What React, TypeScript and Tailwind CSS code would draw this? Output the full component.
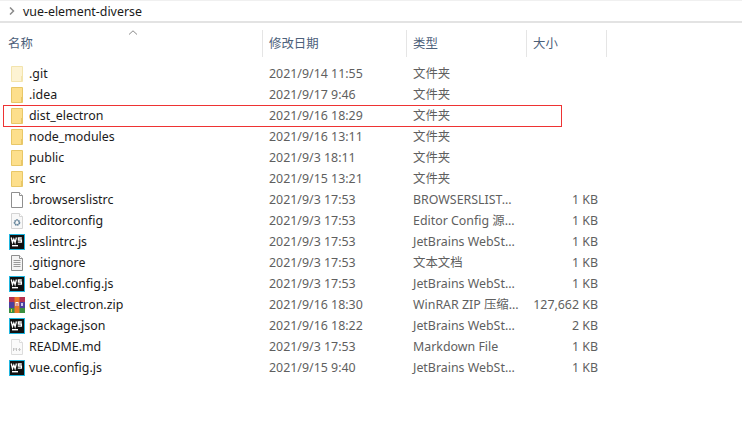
type Kind = "folder" | "folderDim" | "blank" | "config" | "text" | "ws" | "zip" | "md";

interface Item {
  name: string;
  date: string;
  type: string;
  size?: string;
  kind: Kind;
}

const items: Item[] = [
  { name: ".git", date: "2021/9/14 11:55", type: "文件夹", kind: "folderDim" },
  { name: ".idea", date: "2021/9/17 9:46", type: "文件夹", kind: "folder" },
  { name: "dist_electron", date: "2021/9/16 18:29", type: "文件夹", kind: "folder" },
  { name: "node_modules", date: "2021/9/16 13:11", type: "文件夹", kind: "folder" },
  { name: "public", date: "2021/9/3 18:11", type: "文件夹", kind: "folder" },
  { name: "src", date: "2021/9/15 13:21", type: "文件夹", kind: "folder" },
  { name: ".browserslistrc", date: "2021/9/3 17:53", type: "BROWSERSLIST...", size: "1 KB", kind: "blank" },
  { name: ".editorconfig", date: "2021/9/3 17:53", type: "Editor Config 源...", size: "1 KB", kind: "config" },
  { name: ".eslintrc.js", date: "2021/9/3 17:53", type: "JetBrains WebSt...", size: "1 KB", kind: "ws" },
  { name: ".gitignore", date: "2021/9/3 17:53", type: "文本文档", size: "1 KB", kind: "text" },
  { name: "babel.config.js", date: "2021/9/3 17:53", type: "JetBrains WebSt...", size: "1 KB", kind: "ws" },
  { name: "dist_electron.zip", date: "2021/9/16 18:30", type: "WinRAR ZIP 压缩...", size: "127,662 KB", kind: "zip" },
  { name: "package.json", date: "2021/9/16 18:22", type: "JetBrains WebSt...", size: "2 KB", kind: "ws" },
  { name: "README.md", date: "2021/9/3 17:53", type: "Markdown File", size: "1 KB", kind: "md" },
  { name: "vue.config.js", date: "2021/9/15 9:40", type: "JetBrains WebSt...", size: "1 KB", kind: "ws" },
];

function Sheet({ stroke, fill }: { stroke: string; fill: string }) {
  return (
    <>
      <path d="M2.5 .5H10.5L13.5 3.5V15.5H2.5Z" fill={fill} stroke={stroke} />
      <path d="M10.5 .5V3.5H13.5" fill="#fff" stroke={stroke} />
    </>
  );
}

function FileIcon({ kind }: { kind: Kind }) {
  if (kind === "ws") {
    return (
      <svg width="16" height="16" viewBox="0 0 16 16" className="shrink-0">
        <rect x="0" y="0" width="16" height="16" fill="#1fb6e0" />
        <rect x="1" y="1" width="14" height="14" fill="#111" />
        <path d="M2.2 3.5L3.5 8.5L4.8 5L6.1 8.5L7.4 3.5M12.8 4H9.4V6H12.4V8.2H8.8" fill="none" stroke="#fff" strokeWidth="1.3" />
        <rect x="3" y="11" width="6" height="1.4" fill="#fff" />
      </svg>
    );
  }
  if (kind === "zip") {
    return (
      <svg width="16" height="16" viewBox="0 0 16 16" className="shrink-0">
        <rect x="0" y="0" width="16" height="5" fill="#b5314f" />
        <rect x="0" y="5" width="16" height="6" fill="#4b3f9e" />
        <rect x="0" y="11" width="16" height="5" fill="#3b8f3f" />
        <rect x="5.5" y="0" width="5" height="16" fill="#e8782a" />
        <rect x="6.5" y="5" width="3" height="4" fill="#fff" />
        <rect x="7.5" y="6" width="1" height="3" fill="#b5314f" />
        <rect x="2" y="12" width="1" height="3" fill="#e8d24a" />
        <rect x="12" y="6" width="2" height="3" fill="#c9c6e8" />
      </svg>
    );
  }
  if (kind === "blank") {
    return (
      <svg width="16" height="16" viewBox="0 0 16 16" className="shrink-0">
        <Sheet stroke="#8f8f8f" fill="#fff" />
      </svg>
    );
  }
  if (kind === "text") {
    return (
      <svg width="16" height="16" viewBox="0 0 16 16" className="shrink-0">
        <Sheet stroke="#8f8f8f" fill="#f4f4f4" />
        <path d="M4.5 5.5H11.5M4.5 7.5H11.5M4.5 9.5H11.5M4.5 11.5H11.5" stroke="#9a9a9a" />
      </svg>
    );
  }
  if (kind === "config") {
    return (
      <svg width="16" height="16" viewBox="0 0 16 16" className="shrink-0">
        <Sheet stroke="#d4d4d4" fill="#f8f8f8" />
        <circle cx="8" cy="9.5" r="2.4" fill="none" stroke="#5f7f96" strokeWidth="1.8" strokeDasharray="1.4 .5" />
      </svg>
    );
  }
  if (kind === "md") {
    return (
      <svg width="16" height="16" viewBox="0 0 16 16" className="shrink-0">
        <Sheet stroke="#dcdcdc" fill="#fafafa" />
        <path d="M4.5 12V9L6 10.5L7.5 9V12M10.5 9V12M9.2 10.6H11.8" fill="none" stroke="#c4c4c4" />
      </svg>
    );
  }
  const dim = kind === "folderDim";
  return (
    <svg width="16" height="16" viewBox="0 0 16 16" className="shrink-0">
      <path
        d="M2.5 .5H13.5V15.5H2.5Z"
        fill={dim ? "#fdf3d3" : "#fddf8c"}
        stroke={dim ? "#f3e4ad" : "#e8c767"}
      />
      <rect x="12" y="10" width="2" height="5" fill={dim ? "#f3e4ad" : "#e8c767"} />
    </svg>
  );
}

export default function App() {
  return (
    <div className="h-[423px] w-[742px] overflow-hidden bg-white font-['Noto_Sans','Noto_Sans_CJK_SC',sans-serif] text-[12.4px] leading-[21px]">
      <div className="flex h-[23px] items-center border-t border-b-2 border-t-[#f0f0f0] border-b-[#e3e3e3] pl-[9px]">
        <svg width="6" height="8" viewBox="0 0 6 8" className="shrink-0">
          <path d="M1 .5L4.5 4L1 7.5" fill="none" stroke="#8a8a8a" strokeWidth="1.5" />
        </svg>
        <span className="ml-[8px] text-[#1a1a1a]">vue-element-diverse</span>
      </div>

      <div className="mt-[7px] flex h-[27px] text-[#4c607a]">
        <div className="relative flex w-[263px] items-center border-r border-[#e5e5e5] pl-[8px]">
          名称
          <svg width="10" height="5" viewBox="0 0 10 5" className="absolute top-0 left-[128px]">
            <path d="M1 4.5L5 .8L9 4.5" fill="none" stroke="#8a8a8a" />
          </svg>
        </div>
        <div className="flex w-[144px] items-center border-r border-[#e5e5e5] pl-[6px]">修改日期</div>
        <div className="flex w-[120px] items-center border-r border-[#e5e5e5] pl-[6px]">类型</div>
        <div className="flex w-[80px] items-center border-r border-[#e5e5e5] pl-[6px]">大小</div>
      </div>

      <div className="relative mt-[6px]">
        {items.map((item) => (
          <div key={item.name} className="flex h-[21px] items-center text-[#5f5f5f]">
            <div className="flex w-[269px] items-center gap-[4px] pl-[9px]">
              <FileIcon kind={item.kind} />
              <span className="text-[#1a1a1a]">{item.name}</span>
            </div>
            <div className="w-[144px]">{item.date}</div>
            <div className="w-[110px] whitespace-nowrap">{item.type}</div>
            <div className="w-[75px] text-right">{item.size}</div>
          </div>
        ))}
        <div className="pointer-events-none absolute top-[42px] left-[3px] h-[22px] w-[559px] border border-[#ee3333]" />
      </div>
    </div>
  );
}
